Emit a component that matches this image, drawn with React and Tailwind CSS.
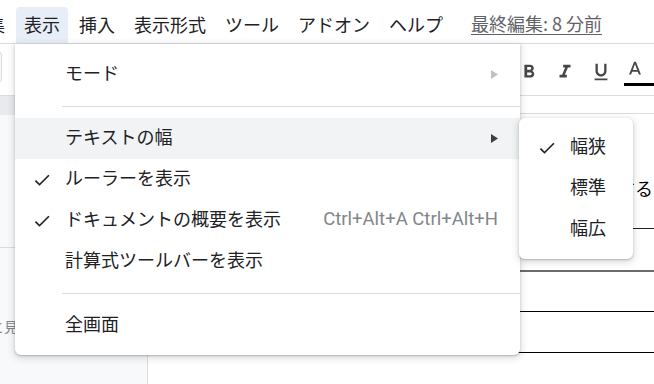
import React from 'react';

const menuBar = ['編集', '表示', '挿入', '表示形式', 'ツール', 'アドオン', 'ヘルプ'];

function Check() {
  return (
    <svg viewBox="0 0 24 24" className="h-5 w-5 fill-[#202124]">
      <path d="M9 16.17L4.83 12l-1.42 1.41L9 19 21 7l-1.41-1.41z" />
    </svg>
  );
}

function Arrow({ dark }) {
  return (
    <svg viewBox="0 0 7 9" className={`h-[9px] w-[7px] ${dark ? 'fill-[#3c4043]' : 'fill-[#bdc1c6]'}`}>
      <polygon points="0,0 7,4.5 0,9" />
    </svg>
  );
}

function Row({ label, checked, arrow, dark, shortcut, active }) {
  return (
    <div className={`relative flex h-[41px] items-center pl-[50px] pr-[22px] ${active ? 'bg-[#f1f3f4]' : ''}`}>
      {checked && (
        <span className="absolute left-[17px] top-[11px]">
          <Check />
        </span>
      )}
      <span className="flex-1 pb-[5px]">{label}</span>
      {shortcut && (
        <span className="pb-[2px] font-['Roboto',sans-serif] text-[18.5px] text-[#80868b]">{shortcut}</span>
      )}
      {arrow && <Arrow dark={dark} />}
    </div>
  );
}

function Sep() {
  return <div className="my-[11px] ml-[47px] h-px bg-[#dadce0]" />;
}

export default function App() {
  return (
    <div className="relative h-[384px] w-[654px] overflow-hidden bg-white font-['Noto_Sans_CJK_JP',sans-serif] text-[18px] text-[#202124]">
      {/* menu bar */}
      <div className="flex h-[44px] items-end border-b border-[#dadce0]">
        <div className="-ml-[39px] flex gap-[3px]">
          {menuBar.map((m) => (
            <span
              key={m}
              className={`flex h-[36px] items-center rounded-t-[4px] px-2 pb-[3px] leading-none ${m === '表示' ? 'bg-[#e8eef7]' : ''}`}
            >
              {m}
            </span>
          ))}
        </div>
        <span className="ml-[20px] flex h-[36px] items-center pb-[3px] text-[#5f6368] underline underline-offset-[3px]">
          最終編集: 8 分前
        </span>
      </div>

      {/* toolbar */}
      <div className="flex h-[52px] items-start border-b border-[#dadce0]">
        <div className="-ml-[40px] mt-[7px] h-[32px] w-[42px] rounded border border-[#dadce0] bg-[#f8f9fa]" />
        <div className="flex-1" />
        <svg viewBox="0 0 24 24" className="mt-[17px] h-[22px] w-[22px] fill-[#444746]">
          <path d="M15.6 10.79c.97-.67 1.65-1.77 1.65-2.79 0-2.26-1.75-4-4-4H7v14h7.04c2.09 0 3.71-1.7 3.71-3.79 0-1.52-.86-2.82-2.15-3.42zM10 6.5h3c.83 0 1.5.67 1.5 1.5s-.67 1.5-1.5 1.5h-3v-3zm3.5 9H10v-3h3.5c.83 0 1.5.67 1.5 1.5s-.67 1.5-1.5 1.5z" />
        </svg>
        <svg viewBox="0 0 24 24" className="ml-[14px] mt-[17px] h-[22px] w-[22px] fill-[#444746]">
          <path d="M10 4v3h2.21l-3.42 8H6v3h8v-3h-2.21l3.42-8H18V4z" />
        </svg>
        <svg viewBox="0 0 24 24" className="ml-[14px] mt-[17px] h-[22px] w-[22px] fill-[#444746]">
          <path d="M12 17c3.31 0 6-2.69 6-6V3h-2.5v8c0 1.93-1.57 3.5-3.5 3.5S8.5 12.93 8.5 11V3H6v8c0 3.31 2.69 6 6 6zm-7 2v2h14v-2H5z" />
        </svg>
        <div className="ml-[12px] mt-[15px] flex w-[30px] flex-col items-start">
          <svg viewBox="0 0 24 24" className="h-[22px] w-[22px] fill-[#444746]">
            <path d="M11 3L5.5 17h2.25l1.12-3h6.25l1.12 3h2.25L13 3h-2zm-1.38 9L12 5.67 14.38 12H9.62z" />
          </svg>
          <div className="mt-[2px] h-[3px] w-[30px] bg-black" />
        </div>
      </div>

      {/* body */}
      <div className="flex h-[288px]">
        <div className="flex w-[148px] flex-col border-r border-[#dadce0] bg-[#f8f9fa]">
          <div className="h-[19px] bg-[#e8eaed]" />
          <div className="mt-[132px] h-px bg-[#dadce0]" />
          <div className="-ml-[10px] mt-[66px] text-[14px] leading-[24px] text-[#80868b]">と見る</div>
        </div>
        <div className="flex flex-1 flex-col">
          <div className="h-[18px] border-b border-[#dadce0]" />
          <p className="mt-[62px] h-[24px] pr-px text-right leading-[24px] text-black">このテキストを入力する</p>
          <div className="mt-[28px] h-px bg-[#202124]" />
          <div className="mt-[41px] h-[2px] bg-[#6b6b6b]" />
          <div className="mt-[39px] h-px bg-black" />
          <div className="mt-[40px] h-px bg-black" />
        </div>
      </div>

      {/* 表示 menu */}
      <div className="absolute left-[15px] top-[44px] w-[505px] rounded-b-[6px] bg-white pb-[9px] pt-[10px] leading-none shadow-[0_2px_6px_2px_rgba(60,64,67,0.15),0_1px_2px_rgba(60,64,67,0.3)]">
        <Row label="モード" arrow />
        <Sep />
        <Row label="テキストの幅" arrow dark active />
        <Row label="ルーラーを表示" checked />
        <Row label="ドキュメントの概要を表示" checked shortcut="Ctrl+Alt+A Ctrl+Alt+H" />
        <Row label="計算式ツールバーを表示" />
        <Sep />
        <Row label="全画面" />
      </div>

      {/* テキストの幅 submenu */}
      <div className="absolute left-[519px] top-[118px] w-[114px] rounded-[6px] bg-white py-[9px] leading-none shadow-[0_2px_6px_2px_rgba(60,64,67,0.15),0_1px_2px_rgba(60,64,67,0.3)]">
        {['幅狭', '標準', '幅広'].map((s, i) => (
          <div key={s} className="relative flex h-[41px] items-center pl-[51px]">
            {i === 0 && (
              <span className="absolute left-[18px] top-[11px]">
                <Check />
              </span>
            )}
            <span className="pb-[5px]">{s}</span>
          </div>
        ))}
      </div>
    </div>
  );
}
